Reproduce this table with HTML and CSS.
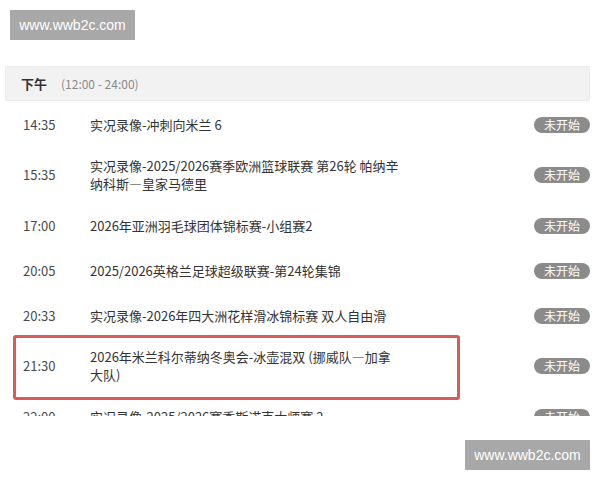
FILE: index.html
```html
<!DOCTYPE html>
<html lang="zh-CN">
  <head>
    <meta charset="UTF-8" />
    <meta name="viewport" content="width=device-width, initial-scale=1.0" />
    <title>节目单</title>
    <link rel="stylesheet" href="styles.css">
  </head>

  <body>
    <div class="mark mark-top">www.wwb2c.com</div>

    <section class="schedule">
      <div class="period">
        <b>下午</b>
        <span>(12:00 - 24:00)</span>
      </div>
      <ul class="list">
        <li class="item">
          <span class="time">14:35</span>
          <span class="title">实况录像-冲刺向米兰 6</span>
          <span class="state">未开始</span>
        </li>
        <li class="item">
          <span class="time">15:35</span>
          <span class="title">实况录像-2025/2026赛季欧洲篮球联赛 第26轮 帕纳辛纳科斯—皇家马德里</span>
          <span class="state">未开始</span>
        </li>
        <li class="item">
          <span class="time">17:00</span>
          <span class="title">2026年亚洲羽毛球团体锦标赛-小组赛2</span>
          <span class="state">未开始</span>
        </li>
        <li class="item">
          <span class="time">20:05</span>
          <span class="title">2025/2026英格兰足球超级联赛-第24轮集锦</span>
          <span class="state">未开始</span>
        </li>
        <li class="item">
          <span class="time">20:33</span>
          <span class="title">实况录像-2026年四大洲花样滑冰锦标赛 双人自由滑</span>
          <span class="state">未开始</span>
        </li>
        <li class="item marked">
          <span class="time">21:30</span>
          <span class="title">2026年米兰科尔蒂纳冬奥会-冰壶混双 (挪威队—加拿大队)</span>
          <span class="state">未开始</span>
          <i class="highlight"></i>
        </li>
        <li class="item">
          <span class="time">22:00</span>
          <span class="title">实况录像-2025/2026赛季斯诺克大师赛 2</span>
          <span class="state">未开始</span>
        </li>
      </ul>
    </section>

    <div class="mark mark-bottom">www.wwb2c.com</div>
  </body>
</html>
```

FILE: styles.css
```css
body {
  margin: 0;
  background-color: #fff;
  font-family: "Noto Sans CJK SC", "Liberation Sans", sans-serif;
  color: #333;
}

.mark {
  position: absolute;
  width: 125px;
  height: 30px;
  line-height: 30px;
  text-align: center;
  background-color: #a8a8a8;
  color: #fff;
  font-family: "Liberation Sans", sans-serif;
  font-size: 14px;
}

.mark-top {
  top: 10px;
  left: 10px;
}

.mark-bottom {
  top: 440px;
  left: 465px;
}

.schedule {
  margin: 66px 10px 0 5px;
  height: 350px;
  overflow: hidden;
}

.period {
  display: flex;
  align-items: center;
  height: 35px;
  padding-left: 15px;
  background-color: #f2f2f2;
  border: 1px solid #ececec;
  box-sizing: border-box;
  font-size: 13px;
}

.period b {
  color: #333;
  width: 40px;
}

.period span {
  color: #8a8a8a;
  font-size: 12px;
}

.list {
  list-style: none;
  margin: 1px 0 0;
  padding: 0;
}

.item {
  position: relative;
  display: flex;
  align-items: center;
  min-height: 45px;
  padding: 10px 0;
  box-sizing: border-box;
  font-size: 13px;
  line-height: 18px;
}

.time {
  width: 67px;
  padding-left: 18px;
  color: #4a4a4a;
}

.title {
  width: 310px;
  color: #333;
}

.state {
  margin-left: auto;
  width: 56px;
  height: 16px;
  line-height: 16px;
  border-radius: 8px;
  background-color: #8b8b8b;
  color: #fff;
  font-size: 12px;
  text-align: center;
}

.highlight {
  position: absolute;
  left: 8px;
  top: -3px;
  bottom: -6px;
  width: 447px;
  border: 3px solid #d65b5b;
  border-radius: 3px;
  box-sizing: border-box;
}
```
